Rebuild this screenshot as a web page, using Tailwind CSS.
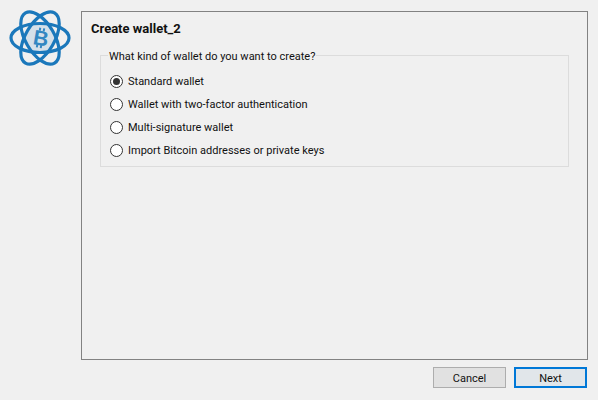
<!DOCTYPE html>
<html lang="en">
<head>
    <meta charset="UTF-8">
    <title>Create wallet</title>
    <script src="https://cdn.jsdelivr.net/npm/@tailwindcss/browser@4"></script>
</head>
<body class="w-[598px] h-[400px] overflow-hidden bg-[#f0f0f0] text-[11px] text-[#111] font-['Roboto','Lato',sans-serif]">
    <div class="flex h-full flex-col pt-[11px] pr-[10px] pb-[12px] pl-[9px]">
        <div class="flex flex-1 min-h-0">
            <!-- logo column -->
            <div class="w-[72px] flex-shrink-0">
                <svg width="62" height="58" viewBox="0 0 62 58" class="-mt-[2px]" fill="none">
                    <circle cx="31" cy="29" r="15" fill="#1c75bc" fill-opacity="0.12"/>
                    <g stroke="#1b78bb" stroke-width="3.2">
                        <ellipse cx="31" cy="29" rx="29" ry="14.5"/>
                        <ellipse cx="31" cy="29" rx="29" ry="14.5" transform="rotate(60 31 29)"/>
                        <ellipse cx="31" cy="29" rx="29" ry="14.5" transform="rotate(120 31 29)"/>
                    </g>
                    <g transform="rotate(10 32 29)">
                        <text x="32" y="36.5" text-anchor="middle" font-size="21" font-weight="700" fill="#3287c2" font-family="Liberation Sans, sans-serif">B</text>
                        <path d="M29.5 19v3M33.5 19v3M29.5 36v3M33.5 36v3" stroke="#3287c2" stroke-width="2"/>
                    </g>
                </svg>
            </div>
            <!-- main panel -->
            <div class="flex-1 border border-[#828282] pl-[9px] pr-[18px] pt-[8px]">
                <h1 class="text-[13px] leading-[17px] font-bold">Create wallet_2</h1>
                <fieldset class="ml-[9px] mt-[10px] h-[120px] border border-[#dcdcdc] pl-[9px]">
                    <legend class="ml-[-2px] px-[1px] pt-[2px] leading-[15px]">What kind of wallet do you want to create?</legend>
                    <div class="mt-[9px] flex flex-col gap-[7px]">
                        <label class="flex h-[16px] items-center gap-[5px]">
                            <span class="flex h-[13px] w-[13px] items-center justify-center rounded-full border border-[#333] bg-white"><span class="h-[7px] w-[7px] rounded-full bg-[#333]"></span></span>
                            <span class="pt-[2px]">Standard wallet</span>
                        </label>
                        <label class="flex h-[16px] items-center gap-[5px]">
                            <span class="h-[13px] w-[13px] rounded-full border border-[#333] bg-white"></span>
                            <span class="pt-[2px]">Wallet with two-factor authentication</span>
                        </label>
                        <label class="flex h-[16px] items-center gap-[5px]">
                            <span class="h-[13px] w-[13px] rounded-full border border-[#333] bg-white"></span>
                            <span class="pt-[2px]">Multi-signature wallet</span>
                        </label>
                        <label class="flex h-[16px] items-center gap-[5px]">
                            <span class="h-[13px] w-[13px] rounded-full border border-[#333] bg-white"></span>
                            <span class="pt-[2px]">Import Bitcoin addresses or private keys</span>
                        </label>
                    </div>
                </fieldset>
            </div>
        </div>
        <!-- buttons -->
        <div class="mt-[7px] flex justify-end gap-[8px] pr-[1px]">
            <button class="h-[21px] w-[73px] border border-[#adadad] bg-[#e1e1e1] pt-[3px]">Cancel</button>
            <button class="h-[21px] w-[73px] border-2 border-[#0078d7] bg-[#e1e6ea] pt-[2px]">Next</button>
        </div>
    </div>
</body>
</html>
